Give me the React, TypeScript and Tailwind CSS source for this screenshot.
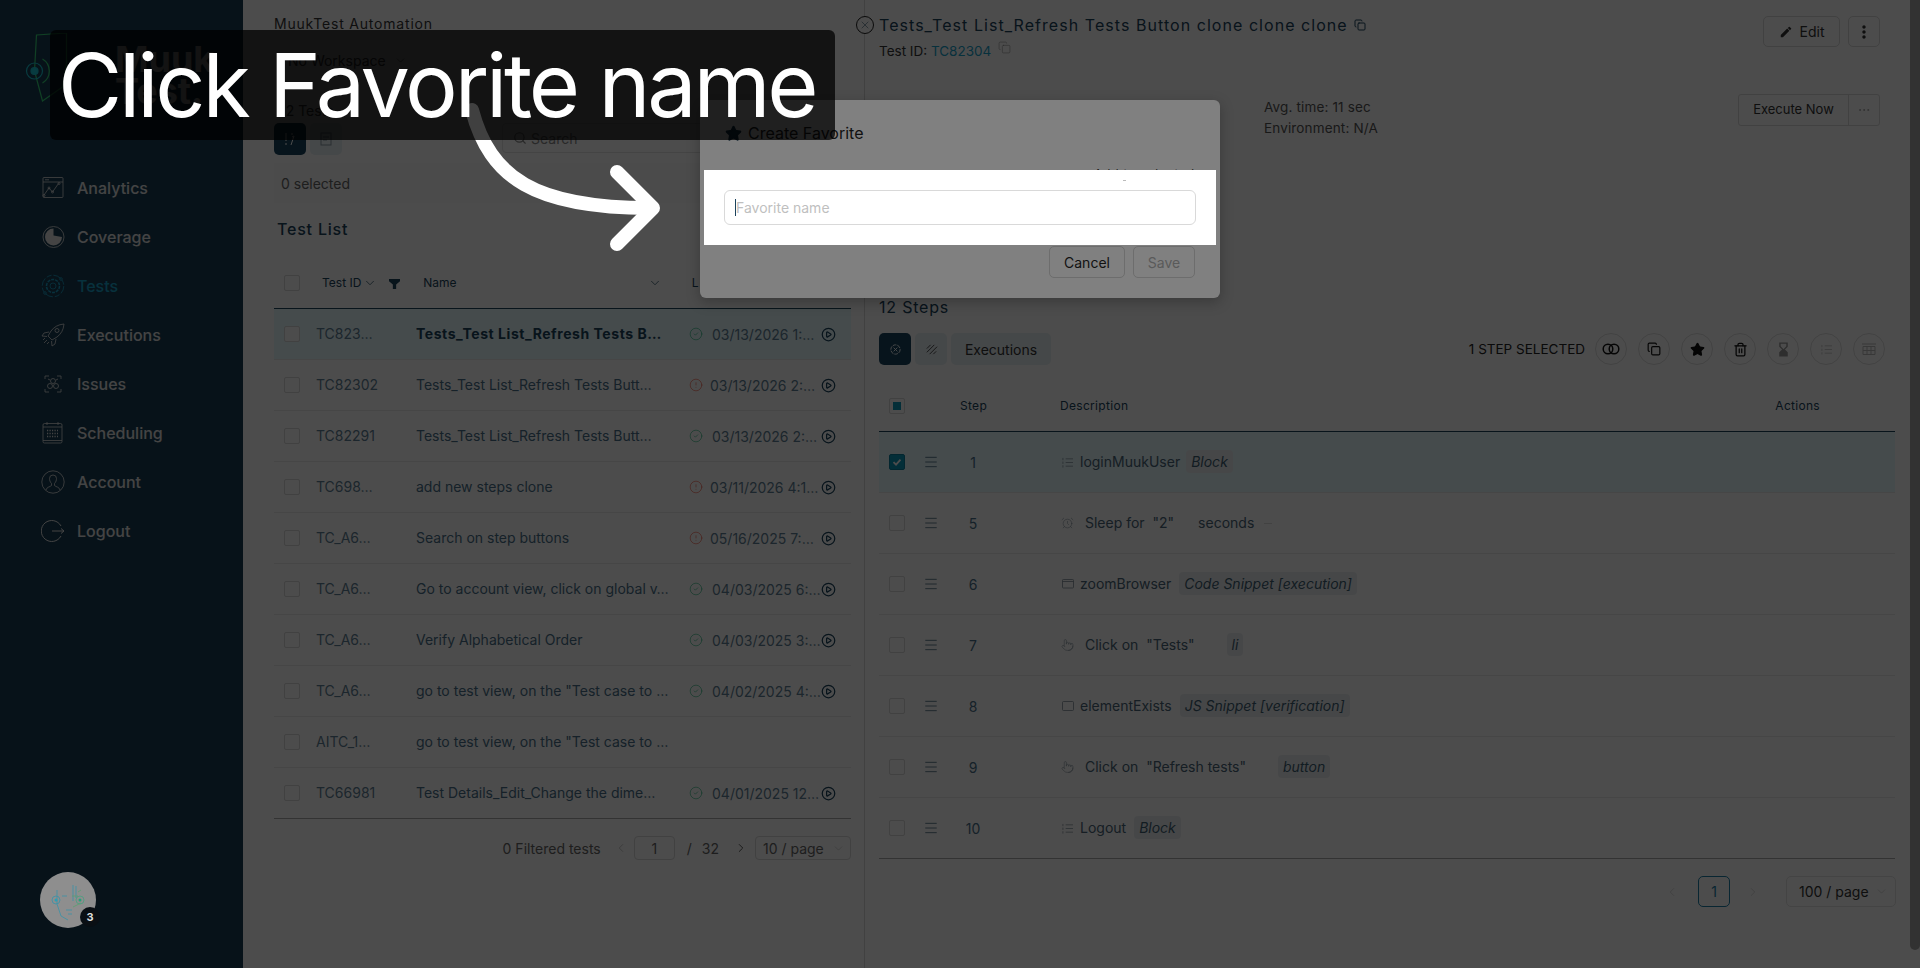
import { AlarmClock, ChevronDown, ChevronLeft, ChevronRight, CircleAlert, CircleCheck, CirclePlay, Copy, Ellipsis, Menu, Pointer, Search, Star, Trash2, X } from "lucide-react";
import { MdEdit, MdHourglassBottom, MdMoreVert } from "react-icons/md";
import type { ReactNode } from "react";

const navy = "text-[#1b435d]";

const AnalyticsIcon = () => (
  <svg viewBox="0 0 24 24" className="h-[24px] w-[24px]" fill="none" stroke="currentColor" strokeWidth="0.8">
    <rect x="2" y="1.5" width="20" height="20" rx="1" />
    <path d="M2 6h20M4 3.8h4" />
    <path d="M3 19l5-7 3.5 4 6-8.5" />
    <circle cx="3" cy="19.5" r="1" /><circle cx="8" cy="12" r="1" /><circle cx="11.5" cy="16" r="1" /><circle cx="18" cy="7.5" r="1" />
  </svg>
);
const CoverageIcon = () => (
  <svg viewBox="0 0 24 24" className="h-[24px] w-[24px]" fill="none" stroke="currentColor">
    <circle cx="12.5" cy="12" r="10.5" strokeWidth="0.8" />
    <path d="M12.5 3.5a8.5 8.5 0 1 0 8.5 8.5l-8.5-1.5z" fill="currentColor" strokeWidth="0" />
  </svg>
);
const TestsIcon = () => (
  <svg viewBox="0 0 24 24" className="h-[24px] w-[24px]" fill="none" stroke="currentColor" strokeWidth="0.8">
    <circle cx="12" cy="12" r="3" />
    <circle cx="12" cy="12" r="6.5" strokeWidth="1.5" strokeDasharray="3 1" />
    <circle cx="12" cy="12" r="10.8" strokeDasharray="8 2 5 2" />
    <circle cx="20" cy="5" r="1.3" /><circle cx="4" cy="19" r="1.3" />
  </svg>
);
const RocketIcon = () => (
  <svg viewBox="0 0 24 24" className="h-[24px] w-[24px]" fill="none" stroke="currentColor" strokeWidth="0.8">
    <path d="M23 1c-6 .5-10 3-13 7l-3 5 4 4 5-3c4-3 6.5-7 7-13z" />
    <circle cx="16" cy="7.5" r="2" />
    <path d="M8 9l-5 1-2 3 5 .5M15 16l-1 5-3 2-.5-5M6 17l-3 3M8 19l-2 2M4 15l-2 2" />
  </svg>
);
const IssuesIcon = () => (
  <svg viewBox="0 0 24 24" className="h-[24px] w-[24px]" fill="none" stroke="currentColor" strokeWidth="0.8">
    <path d="M4 7V4h4M16 4h4v3M4 17v3h4M16 20h4v-3" />
    <circle cx="12" cy="9" r="2.5" /><circle cx="9" cy="14" r="2.5" /><circle cx="15" cy="14" r="2.5" />
    <path d="M7 7l2 1M17 7l-2 1" />
  </svg>
);
const CalendarIcon = () => (
  <svg viewBox="0 0 24 24" className="h-[24px] w-[24px]" fill="none" stroke="currentColor" strokeWidth="0.8">
    <rect x="2" y="2.5" width="19" height="19.5" rx="1.5" />
    <path d="M2 6h19M6 1v3M17 1v3M2 19.5h19" />
    <path d="M6 9.5h11M6 12.5h11M6 15.5h11" strokeWidth="1.3" strokeDasharray="1.2 1.3" />
  </svg>
);
const AccountIcon = () => (
  <svg viewBox="0 0 24 24" className="h-[24px] w-[24px]" fill="none" stroke="currentColor" strokeWidth="0.8">
    <circle cx="12" cy="12" r="11.2" />
    <path d="M5 20c.5-3 4-3 5.5-4.5v-2C9 12 8.500 10 8.500 8.500a3.500 3.500 0 0 1 7 0c0 1.500-.5 3.500-2 5v2c1.500 1.500 5 1.500 5.500 4.500" />
  </svg>
);
const LogoutIcon = () => (
  <svg viewBox="0 0 24 24" className="h-[24px] w-[24px]" fill="none" stroke="currentColor" strokeWidth="1">
    <path d="M20 7a10.500 10.500 0 1 0 0 10" />
    <path d="M11 12h12M20 9.500l3 2.500-3 2.500" />
  </svg>
);

const navItems = [
  { label: "Analytics", icon: <AnalyticsIcon /> },
  { label: "Coverage", icon: <CoverageIcon /> },
  { label: "Tests", icon: <TestsIcon />, active: true },
  { label: "Executions", icon: <RocketIcon /> },
  { label: "Issues", icon: <IssuesIcon /> },
  { label: "Scheduling", icon: <CalendarIcon /> },
  { label: "Account", icon: <AccountIcon /> },
  { label: "Logout", icon: <LogoutIcon /> },
];

const tests = [
  { id: "TC823…", name: "Tests_Test List_Refresh Tests B…", status: "ok", date: "03/13/2026 1:…", bold: true },
  { id: "TC82302", name: "Tests_Test List_Refresh Tests Butt…", status: "fail", date: "03/13/2026 2:…" },
  { id: "TC82291", name: "Tests_Test List_Refresh Tests Butt…", status: "ok", date: "03/13/2026 2:…" },
  { id: "TC698…", name: "add new steps clone", status: "fail", date: "03/11/2026 4:1…" },
  { id: "TC_A6…", name: "Search on step buttons", status: "fail", date: "05/16/2025 7:…" },
  { id: "TC_A6…", name: "Go to account view, click on global v…", status: "ok", date: "04/03/2025 6:…" },
  { id: "TC_A6…", name: "Verify Alphabetical Order", status: "ok", date: "04/03/2025 3:…" },
  { id: "TC_A6…", name: 'go to test view, on the "Test case to …', status: "ok", date: "04/02/2025 4:…" },
  { id: "AITC_1…", name: 'go to test view, on the "Test case to …' },
  { id: "TC66981", name: "Test Details_Edit_Change the dime…", status: "ok", date: "04/01/2025 12…" },
];

const BlockIcon = () => (
  <svg viewBox="0 0 12 12" className="h-[11px] w-[11px]" fill="none" stroke="currentColor" strokeWidth="0.8">
    <path d="M4 2h8M4 6h8M4 10h8M1 1v2.500M1 5v2.500M1 9v2.500" />
  </svg>
);
const WindowIcon = () => (
  <svg viewBox="0 0 12 12" className="h-[12px] w-[12px]" fill="none" stroke="currentColor" strokeWidth="0.8">
    <rect x="0.5" y="1.500" width="11" height="8.500" rx="0.8" />
    <path d="M0.500 3.500h11" />
  </svg>
);
const BoxIcon = () => (
  <svg viewBox="0 0 12 12" className="h-[12px] w-[12px]" fill="none" stroke="currentColor" strokeWidth="0.8">
    <rect x="0.5" y="1.500" width="11" height="9" rx="1" />
  </svg>
);

const stepIcon = "h-[14px] w-[14px] stroke-1";
const steps: { n: number; icon: ReactNode; text: string; tag?: string; extra?: string; gap: string; left: string; selected?: boolean }[] = [
  { n: 1, icon: <BlockIcon />, text: "loginMuukUser", tag: "Block", gap: "ml-[6px]", left: "ml-[6px]", selected: true },
  { n: 5, icon: <AlarmClock className={stepIcon} />, text: 'Sleep for  "2"', extra: "seconds", gap: "ml-[24px]", left: "ml-[11px]" },
  { n: 6, icon: <WindowIcon />, text: "zoomBrowser", tag: "Code Snippet [execution]", gap: "ml-[8px]", left: "ml-[6px]" },
  { n: 7, icon: <Pointer className={stepIcon} />, text: 'Click on  "Tests"', tag: "li", gap: "ml-[32px]", left: "ml-[11px]" },
  { n: 8, icon: <BoxIcon />, text: "elementExists", tag: "JS Snippet [verification]", gap: "ml-[8px]", left: "ml-[6px]" },
  { n: 9, icon: <Pointer className={stepIcon} />, text: 'Click on  "Refresh tests"', tag: "button", gap: "ml-[32px]", left: "ml-[11px]" },
  { n: 10, icon: <BlockIcon />, text: "Logout", tag: "Block", gap: "ml-[8px]", left: "ml-[6px]" },
];

const Checkbox = ({ checked, partial }: { checked?: boolean; partial?: boolean }) => (
  <span className={`flex h-4 w-4 shrink-0 items-center justify-center rounded-[2px] border ${checked ? "border-[#0d7f9e] bg-[#0d9bbd]" : "border-[#d9d9d9] bg-white"}`}>
    {checked && (
      <svg viewBox="0 0 12 12" className="h-[12px] w-[12px]" fill="none" stroke="white" strokeWidth="1.800">
        <path d="M2.500 6.200l2.500 2.500 4.500-5" />
      </svg>
    )}
    {partial && <span className="h-2 w-2 bg-[#0d9bbd]" />}
  </span>
);

const Sidebar = () => (
  <aside className="flex w-[243px] shrink-0 flex-col bg-[#1a3f55] text-[#e4e4e4]">
    <div className="flex h-[140px] items-start pl-[22px] pt-[33px]">
      <svg viewBox="0 0 50 78" className="h-[78px] w-[55px] text-[#1bc5d5]" fill="none" stroke="currentColor" strokeWidth="1.200">
        <path d="M12 2l30-2v30l-4 24-20 14-8-30z" stroke="#37d67a" />
        <circle cx="10" cy="38" r="8" />
        <circle cx="10" cy="38" r="3.500" fill="currentColor" />
        <path d="M18 26a14 14 0 0 1 0 24" stroke="#37d67a" />
      </svg>
      <span className="ml-[38px] mt-[10px] text-[36px] font-bold leading-[32px] text-white">Muuk<br />Test.</span>
    </div>
    <nav className="mt-[23px] flex flex-col">
      {navItems.map((item) => (
        <div key={item.label} className={`flex h-[49px] items-center gap-[12px] pl-[41px] ${item.active ? "text-[#1aa3cc]" : ""}`}>
          {item.icon}
          <span className="text-[16px] font-medium">{item.label}</span>
        </div>
      ))}
    </nav>
  </aside>
);

const UserAvatar = () => (
  <div className="absolute left-[40px] top-[872px] h-[56px] w-[56px] rounded-full bg-[#8e8e8e]">
    <svg viewBox="0 0 56 56" className="h-[56px] w-[56px]" fill="none" strokeWidth="0.8">
      <path d="M17 18v14l4 12 7 4M22 24h5M33 13v16M36 14v12M26 38h6M28 42h4" stroke="#3a93a8" />
      <circle cx="16" cy="28" r="4" stroke="#3a93a8" /><circle cx="16" cy="28" r="1.500" fill="#2a9fb5" />
      <circle cx="40" cy="28" r="4" stroke="#4a9f80" /><circle cx="40" cy="28" r="1.500" fill="#2a9f7a" />
      <path d="M32 24h6M38 20l3-2M33 35l8-4" stroke="#5a9f70" />
    </svg>
    <span className="absolute left-[40px] top-[35px] flex h-5 w-5 items-center justify-center rounded-full bg-[#0a0f14] text-[11px] font-bold text-[#ddd]">3</span>
  </div>
);

const TestList = () => (
  <section className={`flex w-[622px] shrink-0 flex-col border-r border-[#d9d9d9] pl-[31px] pr-[13px] ${navy}`}>
    <div className="mt-[14px] h-[20px] text-[14px] leading-[20px] tracking-[0.8px] text-[#333]">MuukTest Automation</div>
    <div className="mt-[16px] flex h-[20px] items-center gap-[8px] pl-[14px] text-[14px] text-[#444]">
      No Workspace <ChevronDown className="h-[13px] w-[13px] stroke-1" />
    </div>
    <div className="mt-[31px] h-[20px] pl-[6px] text-[14px] leading-[20px] text-[#444]">12 Tests</div>
    <div className="mt-[2px] flex h-[32px] gap-[4px]">
      <span className="flex h-[32px] w-[32px] items-center justify-center rounded-[5px] bg-[#1a4560] text-white">
        <svg viewBox="0 0 14 14" className="h-[14px] w-[14px]" fill="none" stroke="currentColor"><path d="M3 1v8M3 11v2M9 1v2M9 5l2-1-3 9" /></svg>
      </span>
      <span className="flex h-[32px] w-[32px] items-center justify-center rounded-[5px] bg-[#e8f0f4] text-[#8a9aa5]">
        <svg viewBox="0 0 14 14" className="h-[14px] w-[14px]" fill="none" stroke="currentColor"><rect x="2" y="1" width="10" height="12" /><path d="M4 5h6M4 8h4" /></svg>
      </span>
      <div className="ml-[156px] flex h-[30px] flex-1 items-center gap-[4px] rounded-[4px] border border-[#e3e3e3] pl-[10px] text-[14px] text-[#8a8a8a]">
        <Search className="h-[14px] w-[14px]" /> Search
      </div>
    </div>
    <div className="mt-[8px] flex h-[40px] items-center bg-[#fafafa] pl-[7px] text-[14px] text-[#666]">0 selected</div>
    <div className="mt-[16px] h-[20px] pl-[3px] text-[16px] font-medium leading-[20px] tracking-[0.8px]">Test List</div>
    <div className="mt-[19px] flex h-[51px] items-center border-b border-[#1b435d] text-[12px]">
      <span className="ml-[10px] mr-[22px]"><Checkbox /></span>
      <span>Test ID</span>
      <ChevronDown className="ml-[2px] h-[14px] w-[14px] stroke-[1.25]" />
      <svg viewBox="0 0 10 10" className="ml-[12px] h-[11px] w-[11px]" fill="currentColor"><path d="M0 1h10v2L6.500 6v4h-3V6L0 3z" /></svg>
      <span className="ml-[23px]">Name</span>
      <ChevronDown className="ml-[191px] h-[14px] w-[14px] stroke-[1.25]" />
      <span className="ml-[30px]">L</span>
    </div>
    {tests.map((t, i) => (
      <div key={i} className={`flex h-[51px] items-center border-b text-[14px] ${i === 9 ? "border-[#aaa]" : "border-[#ececec]"} ${t.bold ? "bg-[#e6fbff]" : ""}`}>
        <span className="ml-[10px] mr-[16px]"><Checkbox /></span>
        <span className="mb-[1px] w-[100px] text-[#5f7f96]">{t.id}</span>
        <span className={`mb-[2px] w-[273px] truncate text-[14px] ${t.bold ? "font-bold tracking-[0.55px] text-[#1b435d]" : "text-[#4a7089]"}`}>{t.name}</span>
        {t.status === "ok" && <CircleCheck className="h-[14px] w-[14px] shrink-0 stroke-1 text-[#1fb57a]" />}
        {t.status === "fail" && <CircleAlert className="h-[14px] w-[14px] shrink-0 stroke-1 text-[#f5533d]" />}
        {t.date && <span className={`${t.status === "ok" ? "ml-[9px] w-[109px]" : "ml-[7px] w-[111px]"} truncate text-[#5f7f96]`}>{t.date}</span>}
        {t.date && <CirclePlay className="h-[15px] w-[15px] shrink-0 text-[#1b435d]" />}
      </div>
    ))}
    <div className="mt-[17px] flex h-[24px] items-center justify-end text-[14px] text-[#666]">
      <span>0 Filtered tests</span>
      <ChevronLeft className="ml-[13px] h-[14px] w-[14px] stroke-[1.5] text-[#c4c4c4]" />
      <span className="ml-[6px] flex h-[24px] w-[41px] items-center justify-center rounded-[4px] border border-[#d9d9d9]">1</span>
      <span className="ml-[12px]">/</span>
      <span className="ml-[10px]">32</span>
      <ChevronRight className="ml-[15px] h-[14px] w-[14px] stroke-[1.5] text-[#444]" />
      <span className="ml-[7px] flex h-[24px] w-[96px] items-center justify-between rounded-[4px] border border-[#d9d9d9] pl-[7px] pr-[5px]">
        10 / page <ChevronDown className="h-[13px] w-[13px] stroke-1 text-[#bbb]" />
      </span>
    </div>
  </section>
);

const roundBtn = "flex h-[32px] w-[32px] items-center justify-center rounded-full border border-[#dedede]";

const StepsPanel = () => (
  <section className="relative flex min-w-0 flex-1 flex-col pl-[14px] text-[#1b435d]">
    <span className="absolute left-[-9px] top-[16px] flex h-[18px] w-[18px] items-center justify-center rounded-full border border-[#222] bg-white">
      <X className="h-[12px] w-[12px] stroke-1" />
    </span>
    <div className="flex h-[80px] items-start justify-between pr-[30px]">
      <div>
        <div className="mt-[15px] flex h-[20px] items-center gap-[6px] text-[16px] tracking-[1.05px]">
          Tests_Test List_Refresh Tests Button clone clone clone
          <Copy className="h-[12px] w-[12px]" />
        </div>
        <div className="mt-[6px] flex h-[20px] items-center text-[13.500px] text-[#333]">
          Test ID:&nbsp;<span className="text-[#1aa3cc]">TC82304</span>
          <Copy className="mb-[8px] ml-[7px] h-[13px] w-[13px] stroke-1 text-[#888]" />
        </div>
      </div>
      <div className="mt-[16px] flex gap-[8px] text-[14px] text-[#333]">
        <span className="flex h-[31px] w-[77px] items-center justify-center gap-[7px] rounded-[5px] border border-[#d9d9d9]"><MdEdit className="h-[14px] w-[14px]" />Edit</span>
        <span className="flex h-[31px] w-[32px] items-center justify-center rounded-[5px] border border-[#d9d9d9]"><MdMoreVert className="h-[20px] w-[20px]" /></span>
      </div>
    </div>
    <div className="mt-[14px] flex h-[46px] items-start justify-between pr-[30px] text-[13.500px] tracking-[0.15px] text-[#555]">
      <div className="ml-[385px] pt-[3px] leading-[21px]">Avg. time: 11 sec<br />Environment: N/A</div>
      <div className="flex h-[32px] w-[142px] rounded-[3px] border border-[#d9d9d9] text-[13px] tracking-normal text-[#333]">
        <span className="flex w-[110px] items-center justify-center border-r border-[#d9d9d9]">Execute Now</span>
        <span className="flex flex-1 items-center justify-center text-[#888]"><Ellipsis className="h-[14px] w-[14px] stroke-1" /></span>
      </div>
    </div>
    <div className="mt-[157px] h-[20px] text-[16px] leading-[20px] tracking-[0.8px]">12 Steps</div>
    <div className="mt-[16px] flex h-[32px] items-center pr-[25px]">
      <span className="flex h-[32px] w-[32px] items-center justify-center rounded-[5px] bg-[#1a4560] text-white">
        <svg viewBox="0 0 14 14" className="h-[13px] w-[13px]" fill="none" stroke="currentColor"><circle cx="7" cy="7" r="5" strokeDasharray="4 1" /><path d="M5 5l4 4M9 5l-4 4" /></svg>
      </span>
      <span className="ml-[4px] flex h-[32px] w-[32px] items-center justify-center rounded-[5px] bg-[#e8f0f4] text-[#444]">
        <svg viewBox="0 0 14 14" className="h-[13px] w-[13px]" fill="none" stroke="currentColor"><path d="M2 6l4-4M2 10l8-8M5 12l8-8M9 12l3-3" /></svg>
      </span>
      <span className="ml-[4px] flex h-[32px] w-[100px] items-center justify-center rounded-[5px] bg-[#e8f0f4] text-[14px] text-[#333]">Executions</span>
      <span className="ml-auto mr-[10px] text-[13.500px] text-[#222]">1 STEP SELECTED</span>
      <div className="flex gap-[11px] text-[#111]">
        <span className={roundBtn}>
          <svg viewBox="0 0 18 12" className="h-[12px] w-[18px]" fill="none" stroke="currentColor" strokeWidth="1.500"><circle cx="6" cy="6" r="4.800" /><circle cx="12" cy="6" r="4.800" /></svg>
        </span>
        <span className={roundBtn}><Copy className="h-[14px] w-[14px]" /></span>
        <span className={roundBtn}><Star className="h-[15px] w-[15px]" fill="currentColor" /></span>
        <span className={roundBtn}><Trash2 className="h-[15px] w-[15px]" /></span>
        <span className={`${roundBtn} text-[#999]`}><MdHourglassBottom className="h-[17px] w-[17px]" /></span>
        <span className={`${roundBtn} text-[#bbb]`}><BlockIcon /></span>
        <span className={`${roundBtn} text-[#bbb]`}>
          <svg viewBox="0 0 14 12" className="h-[12px] w-[14px]" fill="none" stroke="currentColor"><path d="M0 1h14M1 3.500h12v8H1zM1 7.500h12M5 3.500v8M9 3.500v8" /></svg>
        </span>
      </div>
    </div>
    <div className="mr-[15px] mt-[16px] flex h-[51px] items-center border-b border-[#1b435d] text-[12px] tracking-[0.3px]">
      <span className="ml-[10px]"><Checkbox partial /></span>
      <span className="ml-[55px]">Step</span>
      <span className="ml-[73px]">Description</span>
      <span className="ml-auto mr-[75px]">Actions</span>
    </div>
    {steps.map((s) => (
      <div key={s.n} className={`mr-[15px] flex h-[61px] shrink-0 items-center border-b text-[14px] ${s.n === 10 ? "border-[#aaa]" : "border-[#ececec]"} ${s.selected ? "bg-[#e6fbff]" : ""}`}>
        <span className="ml-[10px]"><Checkbox checked={s.selected} /></span>
        <Menu className="ml-[18px] h-[16px] w-[16px] stroke-1 text-[#1b435d]" />
        <span className="w-[68px] text-center text-[#4a7089]">{s.n}</span>
        <span className="ml-[54px] flex w-[13px] justify-center text-[#7f8e98]">{s.icon}</span>
        <span className={`${s.left} mb-[1px] whitespace-pre text-[#4a6578]`}>{s.text}</span>
        {s.tag && <span className={`${s.gap} mb-[1px] flex h-[23px] items-center rounded-[4px] bg-[#eceff1] px-[5px] italic text-[#3f5f74]`}>{s.tag}</span>}
        {s.extra && <span className={`${s.gap} mb-[2px] text-[#4a6578]`}>{s.extra}</span>}
        {s.extra && <span className="ml-[10px] h-px w-[8px] bg-[#ddd]" />}
      </div>
    ))}
    <div className="mr-[14px] mt-[17px] flex h-[31px] items-center justify-end text-[14px]">
      <ChevronLeft className="h-[14px] w-[14px] stroke-1 text-[#c4c4c4]" />
      <span className="ml-[19px] flex h-[31px] w-[32px] items-center justify-center rounded-[5px] border border-[#1b7fa8] text-[#1b7fa8]">1</span>
      <ChevronRight className="ml-[16px] h-[14px] w-[14px] stroke-1 text-[#c4c4c4]" />
      <span className="ml-[26px] flex h-[31px] w-[110px] items-center justify-between rounded-[5px] border border-[#e3e3e3] pl-[12px] pr-[7px] text-[#333]">
        100 / page <ChevronDown className="h-[13px] w-[13px] stroke-1 text-[#bbb]" />
      </span>
    </div>
  </section>
);

const FavoriteModal = () => (
  <div className="absolute left-[700px] top-[100px] h-[198px] w-[520px] rounded-[6px] bg-[#808080] shadow-[0_4px_14px_rgba(0,0,0,0.25)]">
    <div className="ml-[25px] mt-[23px] flex h-[20px] items-center gap-[6px] text-[16px] text-[#111]">
      <Star className="h-[17px] w-[17px] text-[#0a1c28]" fill="currentColor" /> Create Favorite
    </div>
    <span className="absolute right-[25px] top-[66px] text-[12px] leading-[16px] tracking-[0.8px] text-[#222]">Add to selected</span>
    <div className="absolute left-[4px] top-[70px] flex h-[75px] w-[512px] items-center justify-center bg-white">
      <span className="absolute left-[419px] top-[10px] h-px w-[3px] bg-[#bbb]" />
      <div className="flex h-[35px] w-[472px] items-center rounded-[6px] border border-[#d9d9d9] pl-[10px] text-[14px] text-[#bfbfbf]">
        <span className="h-[17px] w-px bg-[#1b435d]" />Favorite name
      </div>
    </div>
    <div className="absolute right-[25px] top-[146px] flex gap-[8px] text-[14px]">
      <span className="flex h-[32px] w-[76px] items-center justify-center rounded-[5px] border border-[#6d6d6d] text-[#111]">Cancel</span>
      <span className="flex h-[32px] w-[62px] items-center justify-center rounded-[5px] border border-[#6d6d6d] text-[#5a5a5a]">Save</span>
    </div>
  </div>
);

const GuideCaption = () => (
  <>
    <svg viewBox="0 0 240 160" className="absolute left-[445px] top-[100px] h-[160px] w-[240px]" fill="none" stroke="white" strokeWidth="14" strokeLinecap="round" strokeLinejoin="round">
      <path d="M27 10C45 78 90 108 205 108" />
      <path d="M172 72l36 36-36 36" />
    </svg>
    <div className="absolute left-[50px] top-[30px] flex h-[110px] w-[785px] items-center rounded-[6px] bg-black/75 pl-[8px]">
      <span className="whitespace-nowrap text-[88px] leading-none tracking-[-3.200px] text-white">Click Favorite name</span>
    </div>
  </>
);

export default function App() {
  return (
    <div className="relative flex h-[968px] w-[1920px] overflow-hidden bg-white font-['Inter',sans-serif]">
      <Sidebar />
      <TestList />
      <StepsPanel />
      <div className="h-[950px] w-[10px] shrink-0 rounded-b-[5px] bg-[#a8a8a8]" />
      <div className="absolute inset-0 bg-black/70" />
      <UserAvatar />
      <FavoriteModal />
      <GuideCaption />
    </div>
  );
}
